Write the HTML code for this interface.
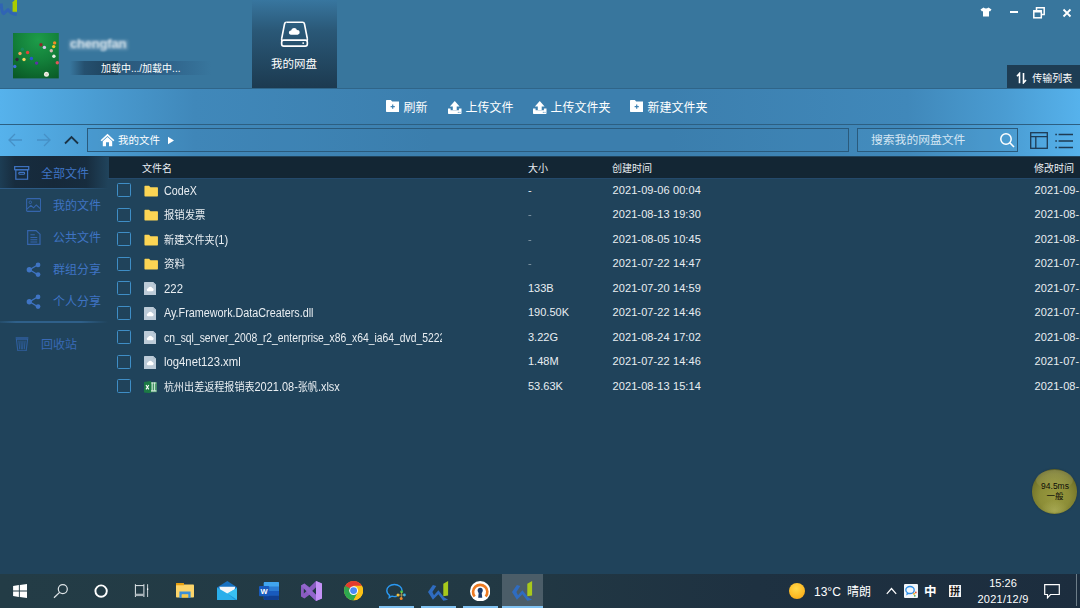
<!DOCTYPE html>
<html><head><meta charset="utf-8">
<style>
*{box-sizing:border-box;margin:0;padding:0}
html,body{width:1080px;height:608px;overflow:hidden;background:#20435b;font-family:"Liberation Sans","Noto Sans CJK SC",sans-serif;}
body{position:relative}
.abs{position:absolute}
#header{left:0;top:0;width:1080px;height:88px;background:#38769d}
#tab{left:252px;top:0;width:84.5px;height:88px;background:linear-gradient(#38769f 0%,#2a5877 35%,#1c3a50 100%)}
#tab .lbl{left:0;width:84px;top:56.6px;text-align:center;color:#fff;font-size:11.5px;line-height:14px}
#toolbar{left:0;top:88px;width:1080px;height:36px;background:linear-gradient(90deg,#56b2ec 0%,#4a9cd2 9%,#4088ba 18%,#3c7fae 40%,#3c7fae 62%,#4088ba 84%,#4a9cd2 93%,#56b2ec 100%);border-top:1px solid #2f6589}
#addr{left:0;top:124px;width:1080px;height:32.6px;background:linear-gradient(90deg,#56b2ec 0%,#4a9cd2 9%,#4088ba 18%,#3c7fae 40%,#3c7fae 62%,#4088ba 84%,#4a9cd2 93%,#56b2ec 100%);border-top:1px solid #2c5f82}
#main{left:0;top:156px;width:1080px;height:418px;background:#20435b}
#side{left:0;top:156px;width:108px;height:418px;background:#20435b}
#thead{left:108.8px;top:156.7px;width:972px;height:21.2px;background:#132634;border-bottom:0}
#thl{left:108px;top:177.8px;width:972px;height:1.2px;background:#24496b}
#taskbar{left:0;top:574px;width:1080px;height:34px;background:linear-gradient(90deg,#233c46 0%,#223944 45%,#1e3141 70%,#1c2d3e 100%)}
.t{color:#e9eef2;font-size:11px;line-height:15px;white-space:nowrap}
.cb{left:117px;width:14px;height:14px;border:1.8px solid #3f8ec6;border-radius:1.5px}
.dt{letter-spacing:.1px}
.nm{width:278px;overflow:hidden;font-size:12px}
.nm .c{font-size:11px}
.ns{display:inline-block;transform-origin:0 50%;white-space:nowrap}
.sb{color:#3f74c4;font-size:12px;line-height:16px;white-space:nowrap}
.tb{color:#fff;font-size:12px;line-height:16px;white-space:nowrap}
.tk{color:#fff;font-size:12px;line-height:16px;white-space:nowrap}
.c{font-size:10px}
</style></head><body>
<div id="header" class="abs"></div>
<!-- app logo -->
<svg class="abs" style="left:0;top:0" width="20" height="18" viewBox="0 0 20 18"><path d="M1.2 3.5Q1.5 12 3.6 13.6L8 9.6Q11 14 16.8 14.6" fill="none" stroke="#3064b4" stroke-width="3" stroke-linejoin="round"/><path d="M12.6 2.2L14.8 0H17V11.8H12.6Z" fill="#aacc00"/></svg>
<!-- avatar -->
<div class="abs" style="left:13px;top:33.4px;width:45.8px;height:45.4px;overflow:hidden">
<svg width="45.8" height="45.4" viewBox="0 0 45.8 45.4"><defs><radialGradient id="gtab" cx="55%" cy="15%" r="95%"><stop offset="0" stop-color="#1d9c49"/><stop offset=".5" stop-color="#13803a"/><stop offset="1" stop-color="#0a5a26"/></radialGradient></defs><rect width="45.8" height="45.4" fill="url(#gtab)"/><circle cx="28.0" cy="11.8" r="1.7" fill="#8c2a2a"/><circle cx="31.4" cy="14.4" r="1.7" fill="#cfc8e8"/><circle cx="41.6" cy="9.9" r="1.7" fill="#f08a28"/><circle cx="40.7" cy="13.6" r="1.7" fill="#f0c828"/><circle cx="38.3" cy="17.8" r="1.7" fill="#d8b8b0"/><circle cx="40.9" cy="23.2" r="1.7" fill="#e8f0e4"/><circle cx="44.3" cy="29.7" r="1.7" fill="#e05858"/><circle cx="9.4" cy="16.2" r="1.7" fill="#178a5a"/><circle cx="7.0" cy="20.5" r="1.7" fill="#f0a060"/><circle cx="14.6" cy="19.5" r="1.7" fill="#e04838"/><circle cx="4.0" cy="26.5" r="1.7" fill="#2a2a3a"/><circle cx="11.0" cy="26.5" r="1.7" fill="#f0d860"/><circle cx="18.4" cy="25.5" r="1.7" fill="#2858d0"/><circle cx="23.6" cy="30.1" r="1.7" fill="#6030a8"/><circle cx="1.8" cy="33.5" r="1.7" fill="#4070d8"/><circle cx="33.5" cy="41.3" r="2.5" fill="#f4f2ea"/><circle cx="33.5" cy="41.3" r="1.2" fill="#d8d4c4"/></svg></div>
<!-- blurred name -->
<div class="abs" style="left:69px;top:40px;width:59px;height:10px;background:rgba(235,242,250,.22);filter:blur(1.5px)"></div>
<div class="abs" style="left:70px;top:36px;width:60px;height:16px;filter:blur(1.3px);color:#eef3f8;font-size:13px;line-height:16px;font-weight:bold;letter-spacing:-0.2px;opacity:.8;white-space:nowrap">chengfan</div>
<div class="abs" style="left:70px;top:61px;width:47.5px;height:13.8px;background:linear-gradient(90deg,rgba(35,74,102,0) 0%,#25506f 30%,#1d3f58 100%)"></div>
<div class="abs" style="left:117.5px;top:61px;width:93px;height:13.8px;background:linear-gradient(90deg,#2a587a 0%,#2d5f86 40%,rgba(56,118,159,0) 100%)"></div>
<div class="abs tb" style="left:101px;top:60.5px;font-size:10px;line-height:15px">加载中.../加载中...</div>
<!-- tab -->
<div id="tab" class="abs">
<svg class="abs" style="left:28px;top:19.5px" width="29" height="29" viewBox="0 0 28 28"><path d="M6.2 2.2H21.8Q23.3 2.2 23.6 3.7L26.3 17.5" fill="none" stroke="#fff" stroke-width="1.6"/><path d="M1.7 17.5L4.4 3.7Q4.7 2.2 6.2 2.2" fill="none" stroke="#fff" stroke-width="1.6"/><rect x="1.6" y="19.4" width="24.8" height="5.8" rx="2" fill="none" stroke="#fff" stroke-width="1.6"/><path d="M1.7 17.5Q1.2 19.5 2.2 20.5M26.3 17.5Q26.8 19.5 25.8 20.5" fill="none" stroke="#fff" stroke-width="1.6"/><circle cx="22.4" cy="22.3" r="0.9" fill="#fff"/><path d="M10.4 14.2a2 2 0 0 1 .3-4a3 3 0 0 1 5.8-.4a2.2 2.2 0 0 1 .6 4.4Z" fill="#fff"/></svg>
<div class="abs lbl">我的网盘</div></div>
<!-- window controls -->
<svg class="abs" style="left:980px;top:7px" width="12" height="10" viewBox="0 0 12 10"><path d="M3.5 0.5L0.5 2.5L2 4.5L3 4V9.5H9V4L10 4.5L11.5 2.5L8.5 0.5Q6 2.3 3.5 0.5Z" fill="#fff"/></svg>
<div class="abs" style="left:1010px;top:11px;width:8px;height:2px;background:#fff"></div>
<svg class="abs" style="left:1033px;top:7px" width="12" height="12" viewBox="0 0 12 12"><path d="M3.5 3.5V0.8H11.2V7.5H8.5" fill="none" stroke="#fff" stroke-width="1.5"/><rect x="0.8" y="3.8" width="7.5" height="7" fill="none" stroke="#fff" stroke-width="1.5"/><path d="M0.8 4.5h7.5" stroke="#fff" stroke-width="2"/></svg>
<svg class="abs" style="left:1062px;top:8px" width="10" height="10" viewBox="0 0 10 10"><path d="M1.5 1.5L8.5 8.5M8.5 1.5L1.5 8.5" stroke="#fff" stroke-width="1.8"/></svg>
<!-- transfer list -->
<div class="abs" style="left:1006.5px;top:65.2px;width:73.5px;height:23.7px;background:#1e3d54"></div>
<svg class="abs" style="left:1016px;top:72px" width="11" height="12.2" viewBox="0 0 11 13" preserveAspectRatio="none"><path d="M3.5 12V1.5L1 4.5" fill="none" stroke="#fff" stroke-width="1.6"/><path d="M7.5 1V11.5L10 8.5" fill="none" stroke="#fff" stroke-width="1.6"/></svg>
<div class="abs tb" style="left:1032.3px;top:70.8px;font-size:10px;line-height:15px">传输列表</div>

<div id="toolbar" class="abs"></div>
<!-- toolbar buttons -->
<svg class="abs" style="left:385.6px;top:100.3px" width="13.5" height="12" viewBox="0 0 13.5 12"><path d="M0 0.7Q0 0 0.7 0H4.8L6.2 1.6H12.8Q13.5 1.6 13.5 2.3V11.3Q13.5 12 12.8 12H0.7Q0 12 0 11.3Z" fill="#fff"/><path d="M6.7 4.6V8.8M4.6 6.7H8.8" stroke="#3f83b4" stroke-width="1.2"/></svg>
<div class="abs tb" style="left:403.5px;top:99.5px">刷新</div>
<svg class="abs" style="left:448px;top:100.5px" width="13.5" height="13" viewBox="0 0 13.5 13"><path d="M6.75 0L11.6 5.4H8.7V9H4.8V5.4H1.9Z" fill="#fff"/><path d="M0 7.6H2.6V9.3H10.9V7.6H13.5V12.3Q13.5 13 12.8 13H0.7Q0 13 0 12.3Z" fill="#fff"/><circle cx="10.3" cy="11.2" r="0.55" fill="#3f83b4"/><circle cx="12" cy="11.2" r="0.55" fill="#3f83b4"/></svg>
<div class="abs tb" style="left:465.5px;top:99.5px">上传文件</div>
<svg class="abs" style="left:533px;top:100.5px" width="13.5" height="13" viewBox="0 0 13.5 13"><path d="M6.75 0L11.6 5.4H8.7V9H4.8V5.4H1.9Z" fill="#fff"/><path d="M0 7.6H2.6V9.3H10.9V7.6H13.5V12.3Q13.5 13 12.8 13H0.7Q0 13 0 12.3Z" fill="#fff"/><circle cx="10.3" cy="11.2" r="0.55" fill="#3f83b4"/><circle cx="12" cy="11.2" r="0.55" fill="#3f83b4"/></svg>
<div class="abs tb" style="left:550.5px;top:99.5px">上传文件夹</div>
<svg class="abs" style="left:629.6px;top:100.3px" width="13.5" height="12" viewBox="0 0 13.5 12"><path d="M0 0.7Q0 0 0.7 0H4.8L6.2 1.6H12.8Q13.5 1.6 13.5 2.3V11.3Q13.5 12 12.8 12H0.7Q0 12 0 11.3Z" fill="#fff"/><path d="M6.7 4.6V8.8M4.6 6.7H8.8" stroke="#3f83b4" stroke-width="1.2"/></svg>
<div class="abs tb" style="left:647.5px;top:99.5px">新建文件夹</div>

<div id="addr" class="abs"></div>
<svg class="abs" style="left:8px;top:133px" width="15" height="14" viewBox="0 0 15 14"><path d="M7 1L1 7L7 13M1 7H14" fill="none" stroke="#4690c6" stroke-width="1.3"/></svg>
<svg class="abs" style="left:36px;top:133px" width="15" height="14" viewBox="0 0 15 14"><path d="M8 1L14 7L8 13M14 7H1" fill="none" stroke="#4690c6" stroke-width="1.3"/></svg>
<svg class="abs" style="left:64px;top:135px" width="15" height="10" viewBox="0 0 15 10"><path d="M1 8.5L7.5 2L14 8.5" fill="none" stroke="#1b3346" stroke-width="1.8"/></svg>
<div class="abs" style="left:87px;top:128px;width:762px;height:24px;border:1px solid #2a5a7c;background:rgba(60,125,170,.12)"></div>
<svg class="abs" style="left:100px;top:133px" width="15" height="14" viewBox="0 0 15 14"><path d="M7.5 0.8L0.6 7.2L1.8 8.3L7.5 3L13.2 8.3L14.4 7.2Z" fill="#fff"/><path d="M2.8 8.3L7.5 4L12.2 8.3V13.2H9V9.3H6V13.2H2.8Z" fill="#fff"/></svg>
<div class="abs tb" style="left:118px;top:133px;font-size:10.5px;line-height:15px">我的文件</div>
<svg class="abs" style="left:167px;top:136px" width="8" height="9" viewBox="0 0 8 9"><path d="M1 0.8L7 4.5L1 8.2Z" fill="#fff"/></svg>
<div class="abs" style="left:857px;top:128px;width:161px;height:24px;border:1px solid #2a5a7c;background:rgba(75,150,200,.25)"></div>
<div class="abs tb" style="left:871px;top:132px;font-size:11.8px;color:#d4e6f3">搜索我的网盘文件</div>
<svg class="abs" style="left:999px;top:132px" width="16" height="16" viewBox="0 0 16 16"><circle cx="7" cy="7" r="5.2" fill="none" stroke="#fff" stroke-width="1.5"/><path d="M10.8 10.8L15 15" stroke="#fff" stroke-width="1.6"/></svg>
<svg class="abs" style="left:1030px;top:132px" width="18" height="17" viewBox="0 0 18 17"><rect x="0.7" y="0.7" width="16.6" height="15.6" fill="none" stroke="#1e3b53" stroke-width="1.3"/><path d="M0.7 4.6H17.3M5.8 4.6V16.3" stroke="#1e3b53" stroke-width="1.3"/></svg>
<svg class="abs" style="left:1055px;top:132.5px" width="18" height="16" viewBox="0 0 18 16"><path d="M3.6 1.5H18M3.6 8H18M3.6 14.5H18" stroke="#1e3b53" stroke-width="1.5"/><path d="M0.3 1.5H1.9M0.3 8H1.9M0.3 14.5H1.9" stroke="#1e3b53" stroke-width="1.5"/></svg>

<div id="main" class="abs"></div>
<div id="side" class="abs"></div>
<div class="abs" style="left:0;top:156px;width:108px;height:32px;background:linear-gradient(90deg,#1d3d54 0%,#172c3e 14%,#16293a 50%,#172c3e 80%,#20435b 100%)"></div>
<div class="abs" style="left:0;top:188px;width:108px;height:1px;background:linear-gradient(90deg,#2d5a84 0%,#2d5a84 70%,rgba(45,90,132,0) 100%)"></div>
<div class="abs" style="left:0;top:321.3px;width:108px;height:1.4px;background:linear-gradient(90deg,rgba(47,96,138,.3) 0%,#2f608a 15%,#2f608a 75%,rgba(47,96,138,0) 100%)"></div>
<!-- sidebar items -->
<svg class="abs" style="left:14.3px;top:166px" width="15.4" height="14" viewBox="0 0 16 16" preserveAspectRatio="none"><rect x="0.7" y="0.7" width="14.6" height="3.6" fill="none" stroke="#3f74c4" stroke-width="1.3"/><rect x="1.9" y="4.3" width="12.2" height="10.8" fill="none" stroke="#3f74c4" stroke-width="1.3"/><rect x="5" y="7.3" width="6" height="2.2" rx="1" fill="none" stroke="#3f74c4" stroke-width="1.2"/></svg>
<div class="abs sb" style="left:41px;top:166px">全部文件</div>
<svg class="abs" style="left:26px;top:198.4px" width="15.2" height="14" viewBox="0 0 17 15" preserveAspectRatio="none"><rect x="0.7" y="0.7" width="15.6" height="13.6" rx="1" fill="none" stroke="#3565ad" stroke-width="1.2"/><circle cx="4.8" cy="4.6" r="1.4" fill="none" stroke="#3565ad" stroke-width="1"/><path d="M1 12L5.5 8L8.5 10.5L11.5 7.5L16 11.5" fill="none" stroke="#3565ad" stroke-width="1.1"/></svg>
<div class="abs sb" style="left:53px;top:198px">我的文件</div>
<svg class="abs" style="left:27.1px;top:230px" width="13.7" height="15" viewBox="0 0 14 17" preserveAspectRatio="none"><path d="M0.7 0.7H9.3L13.3 4.7V16.3H0.7Z" fill="none" stroke="#3565ad" stroke-width="1.2"/><path d="M3.5 5.5H8M3.5 8.5H10.5M3.5 11H10.5M3.5 13.5H10.5" stroke="#3565ad" stroke-width="1.1"/></svg>
<div class="abs sb" style="left:53px;top:230px">公共文件</div>
<svg class="abs" style="left:26px;top:261.7px" width="15.5" height="15.5" viewBox="0 0 17 17"><path d="M13 3L4 8.5L13 14" fill="none" stroke="#3f74c4" stroke-width="1.4"/><circle cx="13.2" cy="3.2" r="2.6" fill="#3f74c4"/><circle cx="3.6" cy="8.5" r="2.9" fill="#3f74c4"/><circle cx="13.2" cy="13.8" r="2.6" fill="#3f74c4"/></svg>
<div class="abs sb" style="left:53px;top:262px">群组分享</div>
<svg class="abs" style="left:26px;top:293.7px" width="15.5" height="15.5" viewBox="0 0 17 17"><path d="M13 3L4 8.5L13 14" fill="none" stroke="#3f74c4" stroke-width="1.4"/><circle cx="13.2" cy="3.2" r="2.6" fill="#3f74c4"/><circle cx="3.6" cy="8.5" r="2.9" fill="#3f74c4"/><circle cx="13.2" cy="13.8" r="2.6" fill="#3f74c4"/></svg>
<div class="abs sb" style="left:53px;top:294px">个人分享</div>
<svg class="abs" style="left:15.2px;top:336.5px" width="14" height="14.6" viewBox="0 0 15 16" preserveAspectRatio="none"><path d="M0.7 1H14.3M1.5 2.5L3 15H12L13.5 2.5Z" fill="none" stroke="#2f5f9f" stroke-width="1.2"/><path d="M4.2 4L5 13.5M6.4 4L6.8 13.5M8.6 4L8.2 13.5M10.8 4L10 13.5" stroke="#2f5f9f" stroke-width="1"/></svg>
<div class="abs sb" style="left:41px;top:337px;color:#3869b4">回收站</div>

<div id="thead" class="abs"></div><div id="thl" class="abs"></div>
<div class="abs t" style="left:142px;top:160.5px;font-size:10px">文件名</div>
<div class="abs t" style="left:528px;top:160.5px;font-size:10px">大小</div>
<div class="abs t" style="left:612px;top:160.5px;font-size:10px">创建时间</div>
<div class="abs t" style="left:1034px;top:160.5px;font-size:10px">修改时间</div>
<div class="abs cb" style="top:183.0px"></div>
<svg class="abs" style="left:143.7px;top:184.8px" width="14.4" height="12.2" viewBox="0 0 16 13"><path d="M0.5 1.2Q0.5 0.5 1.2 0.5H5.6L7.2 2.2H14.8Q15.5 2.2 15.5 2.9V11.8Q15.5 12.5 14.8 12.5H1.2Q0.5 12.5 0.5 11.8Z" fill="#fcd554"/></svg>
<div class="abs t nm" style="left:164px;top:183.5px"><span class="ns" style="transform:scaleX(0.894)">CodeX</span></div>
<div class="abs t" style="left:528px;top:182.9px">-</div>
<div class="abs t dt" style="left:612.5px;top:182.9px">2021-09-06 00:04</div>
<div class="abs t dt" style="left:1034.5px;top:182.9px">2021-09-</div>
<div class="abs cb" style="top:207.5px"></div>
<svg class="abs" style="left:143.7px;top:209.3px" width="14.4" height="12.2" viewBox="0 0 16 13"><path d="M0.5 1.2Q0.5 0.5 1.2 0.5H5.6L7.2 2.2H14.8Q15.5 2.2 15.5 2.9V11.8Q15.5 12.5 14.8 12.5H1.2Q0.5 12.5 0.5 11.8Z" fill="#fcd554"/></svg>
<div class="abs t nm" style="left:164px;top:208.0px"><span class="ns" style="transform:scaleX(0.941)"><span class="c">报销发票</span></span></div>
<div class="abs t" style="left:528px;top:207.4px;opacity:.5">-</div>
<div class="abs t dt" style="left:612.5px;top:207.4px">2021-08-13 19:30</div>
<div class="abs t dt" style="left:1034.5px;top:207.4px">2021-08-</div>
<div class="abs cb" style="top:232.0px"></div>
<svg class="abs" style="left:143.7px;top:233.8px" width="14.4" height="12.2" viewBox="0 0 16 13"><path d="M0.5 1.2Q0.5 0.5 1.2 0.5H5.6L7.2 2.2H14.8Q15.5 2.2 15.5 2.9V11.8Q15.5 12.5 14.8 12.5H1.2Q0.5 12.5 0.5 11.8Z" fill="#fcd554"/></svg>
<div class="abs t nm" style="left:164px;top:232.5px"><span class="ns" style="transform:scaleX(0.921)"><span class="c">新建文件夹</span>(1)</span></div>
<div class="abs t" style="left:528px;top:231.9px;opacity:.5">-</div>
<div class="abs t dt" style="left:612.5px;top:231.9px">2021-08-05 10:45</div>
<div class="abs t dt" style="left:1034.5px;top:231.9px">2021-08-</div>
<div class="abs cb" style="top:256.5px"></div>
<svg class="abs" style="left:143.7px;top:258.3px" width="14.4" height="12.2" viewBox="0 0 16 13"><path d="M0.5 1.2Q0.5 0.5 1.2 0.5H5.6L7.2 2.2H14.8Q15.5 2.2 15.5 2.9V11.8Q15.5 12.5 14.8 12.5H1.2Q0.5 12.5 0.5 11.8Z" fill="#fcd554"/></svg>
<div class="abs t nm" style="left:164px;top:257.0px"><span class="ns" style="transform:scaleX(0.959)"><span class="c">资料</span></span></div>
<div class="abs t" style="left:528px;top:256.4px;opacity:.5">-</div>
<div class="abs t dt" style="left:612.5px;top:256.4px">2021-07-22 14:47</div>
<div class="abs t dt" style="left:1034.5px;top:256.4px">2021-07-</div>
<div class="abs cb" style="top:281.0px"></div>
<svg class="abs" style="left:144.2px;top:282.1px" width="12.2" height="13.4" viewBox="0 0 12.2 13.4"><path d="M0 0.6Q0 0 0.6 0H9.2L12.2 3V12.8Q12.2 13.4 11.6 13.4H0.6Q0 13.4 0 12.8Z" fill="#bccbd8"/><path d="M9.2 0L12.2 3H9.8Q9.2 3 9.2 2.4Z" fill="#aebfce"/><path d="M3.9 9.3a1.6 1.6 0 0 1 .2-3.1a2.2 2.2 0 0 1 4.1-.2a1.7 1.7 0 0 1 .3 3.3Z" fill="#fff"/></svg>
<div class="abs t nm" style="left:164px;top:281.5px"><span class="ns" style="transform:scaleX(0.949)">222</span></div>
<div class="abs t" style="left:528px;top:280.9px">133B</div>
<div class="abs t dt" style="left:612.5px;top:280.9px">2021-07-20 14:59</div>
<div class="abs t dt" style="left:1034.5px;top:280.9px">2021-07-</div>
<div class="abs cb" style="top:305.5px"></div>
<svg class="abs" style="left:144.2px;top:306.6px" width="12.2" height="13.4" viewBox="0 0 12.2 13.4"><path d="M0 0.6Q0 0 0.6 0H9.2L12.2 3V12.8Q12.2 13.4 11.6 13.4H0.6Q0 13.4 0 12.8Z" fill="#bccbd8"/><path d="M9.2 0L12.2 3H9.8Q9.2 3 9.2 2.4Z" fill="#aebfce"/><path d="M3.9 9.3a1.6 1.6 0 0 1 .2-3.1a2.2 2.2 0 0 1 4.1-.2a1.7 1.7 0 0 1 .3 3.3Z" fill="#fff"/></svg>
<div class="abs t nm" style="left:164px;top:306.0px"><span class="ns" style="transform:scaleX(0.899)">Ay.Framework.DataCreaters.dll</span></div>
<div class="abs t" style="left:528px;top:305.4px">190.50K</div>
<div class="abs t dt" style="left:612.5px;top:305.4px">2021-07-22 14:46</div>
<div class="abs t dt" style="left:1034.5px;top:305.4px">2021-07-</div>
<div class="abs cb" style="top:330.0px"></div>
<svg class="abs" style="left:144.2px;top:331.1px" width="12.2" height="13.4" viewBox="0 0 12.2 13.4"><path d="M0 0.6Q0 0 0.6 0H9.2L12.2 3V12.8Q12.2 13.4 11.6 13.4H0.6Q0 13.4 0 12.8Z" fill="#bccbd8"/><path d="M9.2 0L12.2 3H9.8Q9.2 3 9.2 2.4Z" fill="#aebfce"/><path d="M3.9 9.3a1.6 1.6 0 0 1 .2-3.1a2.2 2.2 0 0 1 4.1-.2a1.7 1.7 0 0 1 .3 3.3Z" fill="#fff"/></svg>
<div class="abs t nm" style="left:164px;top:330.5px"><span class="ns" style="transform:scaleX(0.862)">cn_sql_server_2008_r2_enterprise_x86_x64_ia64_dvd_5222</span></div>
<div class="abs t" style="left:528px;top:329.9px">3.22G</div>
<div class="abs t dt" style="left:612.5px;top:329.9px">2021-08-24 17:02</div>
<div class="abs t dt" style="left:1034.5px;top:329.9px">2021-08-</div>
<div class="abs cb" style="top:354.5px"></div>
<svg class="abs" style="left:144.2px;top:355.6px" width="12.2" height="13.4" viewBox="0 0 12.2 13.4"><path d="M0 0.6Q0 0 0.6 0H9.2L12.2 3V12.8Q12.2 13.4 11.6 13.4H0.6Q0 13.4 0 12.8Z" fill="#bccbd8"/><path d="M9.2 0L12.2 3H9.8Q9.2 3 9.2 2.4Z" fill="#aebfce"/><path d="M3.9 9.3a1.6 1.6 0 0 1 .2-3.1a2.2 2.2 0 0 1 4.1-.2a1.7 1.7 0 0 1 .3 3.3Z" fill="#fff"/></svg>
<div class="abs t nm" style="left:164px;top:355.0px"><span class="ns" style="transform:scaleX(0.942)">log4net123.xml</span></div>
<div class="abs t" style="left:528px;top:354.4px">1.48M</div>
<div class="abs t dt" style="left:612.5px;top:354.4px">2021-07-22 14:46</div>
<div class="abs t dt" style="left:1034.5px;top:354.4px">2021-07-</div>
<div class="abs cb" style="top:379.0px"></div>
<svg class="abs" style="left:144px;top:380.8px" width="13" height="12.4" viewBox="0 0 13 12.4"><rect x="6" y="1.2" width="6.8" height="10" fill="#4f9e6e"/><path d="M8.3 1.6V9.4M10.4 1.6V9.4" stroke="#cfe6d7" stroke-width="1.1"/><path d="M9.3 1.6V9.4" stroke="#2a7f50" stroke-width="0.7"/><path d="M7 9.9H12.4" stroke="#fff" stroke-width="0.9"/><path d="M7.2 2H12.2" stroke="#e6f2ea" stroke-width="0.7"/><path d="M0 1L7 0V12.4L0 11.4Z" fill="#1c7a45"/><path d="M2 4L4.8 8.4M4.8 4L2 8.4" stroke="#fff" stroke-width="1.1"/></svg>
<div class="abs t nm" style="left:164px;top:379.5px"><span class="ns" style="transform:scaleX(0.914)"><span class="c">杭州出差返程报销表</span>2021.08-<span class="c">张帆</span>.xlsx</span></div>
<div class="abs t" style="left:528px;top:378.9px">53.63K</div>
<div class="abs t dt" style="left:612.5px;top:378.9px">2021-08-13 15:14</div>
<div class="abs t dt" style="left:1034.5px;top:378.9px">2021-08-</div>

<!-- speed ball -->
<div class="abs" style="left:1031.8px;top:468.5px;width:45.6px;height:45.2px;border-radius:50%;background:radial-gradient(ellipse 60% 60% at 50% 62%,#98993f 0%,#8c8d37 55%,#77782c 85%,#626324 100%);box-shadow:0 0 1.5px rgba(20,30,30,.5)"></div>
<div class="abs" style="left:1036px;top:470px;width:37px;height:20px;border-radius:50%;background:linear-gradient(rgba(255,255,200,.20),rgba(255,255,200,.03))"></div>
<div class="abs" style="left:1040px;top:500px;width:29px;height:13px;border-radius:50%;background:radial-gradient(ellipse at 50% 80%,rgba(210,212,130,.35),rgba(210,212,130,0) 70%)"></div>
<div class="abs" style="left:1032px;top:480.7px;width:46px;text-align:center;color:#0c0c08;font-size:8.5px;line-height:10.2px">94.5ms<br>一般</div>

<div id="taskbar" class="abs"></div>
<!-- taskbar content -->
<div class="abs" style="left:502.4px;top:574px;width:40.6px;height:34px;background:#4b5d68"></div>
<div class="abs" style="left:379px;top:606.3px;width:34.5px;height:2px;background:#80c2f2"></div>
<div class="abs" style="left:421px;top:606.3px;width:34.6px;height:2px;background:#80c2f2"></div>
<div class="abs" style="left:463.2px;top:606.3px;width:34.6px;height:2px;background:#80c2f2"></div>
<div class="abs" style="left:502.4px;top:606.3px;width:40.6px;height:2px;background:#80c2f2"></div>
<!-- windows -->
<svg class="abs" style="left:13px;top:584px" width="14.2" height="14" viewBox="0 0 15 15"><path d="M0 2.1L6.2 1.2V7H0ZM7.2 1.1L15 0V7H7.2ZM0 8H6.2V13.8L0 12.9ZM7.2 8H15V15L7.2 13.9Z" fill="#fff"/></svg>
<!-- search -->
<svg class="abs" style="left:53px;top:583px" width="16" height="16" viewBox="0 0 16 16"><circle cx="9.8" cy="6.1" r="4.5" fill="none" stroke="#dfe5e8" stroke-width="1.2"/><path d="M6.6 9.4L1 14.8" stroke="#dfe5e8" stroke-width="1.3"/></svg>
<!-- cortana -->
<svg class="abs" style="left:93px;top:583px" width="16" height="16" viewBox="0 0 16 16"><circle cx="8.1" cy="8.1" r="5.7" fill="none" stroke="#fff" stroke-width="1.9"/></svg>
<!-- task view -->
<svg class="abs" style="left:134px;top:584px" width="16" height="14" viewBox="0 0 16 14"><path d="M1.4 0.2V13M9.9 0.2V13" stroke="#e4e9ec" stroke-width="1"/><path d="M1.4 1.6H9.9" stroke="#e4e9ec" stroke-width="1"/><path d="M1.4 10.9H9.9" stroke="#aab4ba" stroke-width="2.4"/><path d="M13.6 0.2V13" stroke="#c8d0d5" stroke-width="1"/><rect x="13" y="4.4" width="1.2" height="1.6" fill="#fff"/></svg>
<!-- explorer -->
<svg class="abs" style="left:176px;top:583.3px" width="18" height="15" viewBox="0 0 18 15"><path d="M0 1Q0 0 1 0H7Q8 0 8 1V3H0Z" fill="#e8a010"/><path d="M0 2.4Q0 1.6 0.8 1.6H17.2Q18 1.6 18 2.4V13.8Q18 14.6 17.2 14.6H0.8Q0 14.6 0 13.8Z" fill="#fcd56a"/><path d="M0 1Q0 0 1 0H7Q8 0 8 1V2.2H0Z" fill="#e8a010"/><path d="M3.4 8.4H14.6V15H12.2V11.4H5.8V15H3.4Z" fill="#3a8fd8"/><rect x="5.8" y="11.4" width="6.4" height="3.2" fill="#f7c948"/></svg>
<!-- mail -->
<svg class="abs" style="left:216.8px;top:581px" width="20.6" height="19" viewBox="0 0 20.6 19"><path d="M10.3 0L20.6 6.6V18.4Q20.6 19 20 19H0.6Q0 19 0 18.4V6.6Z" fill="#1670c0"/><path d="M2.4 5.8H18.2L17.2 11L10.3 13.4L3.4 11Z" fill="#f4f6f8"/><path d="M0 6.6L10.3 12.6L20.6 6.6V18.4Q20.6 19 20 19H0.6Q0 19 0 18.4Z" fill="#2aaeea"/><path d="M10.3 12.6L20.6 6.6V19Z" fill="#3cc4f4" opacity=".8"/><path d="M10.3 12.6L20.6 19H18Z" fill="#1a8ad4" opacity=".7"/></svg>
<!-- word -->
<svg class="abs" style="left:259.2px;top:582px" width="20" height="18" viewBox="0 0 20 18"><rect x="4.8" y="0" width="15.2" height="18" rx="1" fill="#2b7cd3"/><path d="M4.8 1Q4.8 0 5.8 0H19Q20 0 20 1V4.5H4.8Z" fill="#41a5ee"/><rect x="4.8" y="9" width="15.2" height="4.5" fill="#185abd"/><path d="M4.8 13.5H20V17Q20 18 19 18H5.8Q4.8 18 4.8 17Z" fill="#103f91"/><rect x="0" y="4" width="10.2" height="10.2" rx="1" fill="#185abd"/><text x="5.1" y="12" font-size="7.5" font-weight="bold" fill="#fff" text-anchor="middle" font-family="Liberation Sans, sans-serif">W</text></svg>
<!-- VS -->
<svg class="abs" style="left:301px;top:581px" width="21" height="20" viewBox="0 0 21 20"><path d="M15 0L21 2.6V17.4L15 20L8.5 13.7L3.4 17.5L0 15.4V4.6L3.4 2.5L8.5 6.3Z" fill="#8a5cc2"/><path d="M15 0L21 2.6V17.4L15 20Z" fill="#c592f6"/><path d="M15 6.2L11.2 10L15 13.8Z" fill="#213a44"/><path d="M2.8 7.6L5.6 10L2.8 12.4Z" fill="#213a44"/><path d="M3.4 2.5L15 13.8V20L8.5 13.7L0 4.6Z" fill="#9a6fd6" opacity=".55"/></svg>
<!-- chrome -->
<svg class="abs" style="left:344.2px;top:581.4px" width="19.2" height="19.2" viewBox="0 0 20 20"><circle cx="10" cy="10" r="10" fill="#fbc116"/><path d="M10 10L1.34 5A10 10 0 0 0 10 20L14.2 12.4Z" fill="#2da94f"/><path d="M1.34 5A10 10 0 0 1 18.66 5H10L6 12Z" fill="#e33b2e"/><path d="M10 5.4H18.8A10 10 0 0 1 10 20L14 12.4Z" fill="#fbc116"/><path d="M10 10L1.34 5L6.1 12.3Z" fill="#2da94f"/><circle cx="10" cy="10" r="4.6" fill="#fff"/><circle cx="10" cy="10" r="3.6" fill="#4a8af4"/></svg>
<!-- wechat work -->
<svg class="abs" style="left:385px;top:583px" width="21" height="17" viewBox="0 0 21 17"><path d="M9.4 1.5C5.2 1.5 1.8 4.2 1.8 7.6C1.8 9.5 2.9 11.2 4.6 12.3L4.2 14.6L6.8 13.2C7.6 13.5 8.5 13.6 9.4 13.6C10.2 13.6 11 13.5 11.8 13.3M16.9 8.4C17 8.1 17 7.9 17 7.6C17 4.2 13.6 1.5 9.4 1.5" fill="none" stroke="#2b9af3" stroke-width="1.4"/><circle cx="16.6" cy="8.8" r="1.5" fill="#3fc04a"/><circle cx="19.4" cy="12" r="1.4" fill="#2bb0f5"/><circle cx="16.2" cy="15.4" r="1.5" fill="#f5821f"/><circle cx="13" cy="12" r="1.5" fill="#f7c33c"/><path d="M16.6 8.8L16.3 15.4M13 12H19.4" stroke="#d8b050" stroke-width="0.8" opacity=".8"/></svg>
<!-- W app -->
<svg class="abs" style="left:427.8px;top:581px" width="21" height="21" viewBox="0 0 21 21"><path d="M4.9 3.9L8.3 4.9L4.4 11.1L6 14.2L10.4 9.2L16 16.2L20.1 18.75L15.3 19.7L10.4 13.2L4.9 18.75L0 11.1Z" fill="#2f6cc0"/><path d="M15.3 2.8L20.1 0V14.6L15.3 15.3Z" fill="#a8c91c"/></svg>
<!-- openvpn -->
<svg class="abs" style="left:470px;top:580.7px" width="20.4" height="20.4" viewBox="0 0 20 20"><circle cx="10" cy="10" r="10" fill="#fff"/><path d="M4.6 15.2A7 7 0 1 1 15.4 15.2" fill="none" stroke="#ee7b22" stroke-width="2.6"/><circle cx="10" cy="9.2" r="2.5" fill="#1b3a6b"/><path d="M8.8 9.2H11.2L12 16.4H8Z" fill="#1b3a6b"/></svg>
<!-- W app active -->
<svg class="abs" style="left:511.8px;top:581px" width="21" height="21" viewBox="0 0 21 21"><path d="M4.9 3.9L8.3 4.9L4.4 11.1L6 14.2L10.4 9.2L16 16.2L20.1 18.75L15.3 19.7L10.4 13.2L4.9 18.75L0 11.1Z" fill="#2f6cc0"/><path d="M15.3 2.8L20.1 0V14.6L15.3 15.3Z" fill="#a8c91c"/></svg>
<!-- tray -->
<div class="abs" style="left:789px;top:583px;width:16px;height:16px;border-radius:50%;background:radial-gradient(circle at 45% 35%,#ffd84a 0%,#fdb924 60%,#f59b16 100%)"></div>
<div class="abs tk" style="left:814px;top:584px">13°C</div>
<div class="abs tk" style="left:847px;top:584px">晴朗</div>
<svg class="abs" style="left:886px;top:587px" width="11" height="8" viewBox="0 0 11 8"><path d="M0.8 6.8L5.5 1.5L10.2 6.8" fill="none" stroke="#fff" stroke-width="1.2"/></svg>
<svg class="abs" style="left:904px;top:584px" width="14" height="14" viewBox="0 0 14 14"><rect width="14" height="14" rx="1" fill="#f2f6fa"/><path d="M6 2.5C3.6 2.5 1.8 4 1.8 6C1.8 7.1 2.4 8.1 3.4 8.7L3.1 10.2L4.7 9.3C5.1 9.4 5.5 9.5 6 9.5C8.4 9.5 10.2 8 10.2 6C10.2 4 8.4 2.5 6 2.5Z" fill="none" stroke="#2f8fe6" stroke-width="1.3"/><circle cx="10" cy="9.8" r="1.1" fill="#f2b33a"/><circle cx="11.8" cy="8.5" r="0.9" fill="#e8563a"/><circle cx="10.8" cy="11.8" r="0.9" fill="#4cb25a"/></svg>
<div class="abs tk" style="left:924px;top:584px;font-size:12.5px;font-weight:bold">中</div>
<div class="abs" style="left:949.3px;top:585px;width:11.4px;height:11.8px;background:#f4f4f4"></div>
<div class="abs" style="left:949px;top:583.5px;width:12px;text-align:center;color:#111;font-size:10px;line-height:15px;font-weight:bold">拼</div>
<div class="abs tk" style="left:975px;top:576px;width:56px;text-align:center;font-size:11px;line-height:15px">15:26</div>
<div class="abs tk" style="left:970px;top:592px;width:66px;text-align:center;letter-spacing:.25px;font-size:11px;line-height:15px">2021/12/9</div>
<svg class="abs" style="left:1044px;top:584px" width="16" height="15" viewBox="0 0 16 15"><path d="M0.7 0.7H15.3V10.5H6.5L3.5 13.8V10.5H0.7Z" fill="none" stroke="#fff" stroke-width="1.2"/></svg>
<div class="abs" style="left:1076px;top:574px;width:1px;height:32px;background:#6d7d88"></div>
</body></html>
